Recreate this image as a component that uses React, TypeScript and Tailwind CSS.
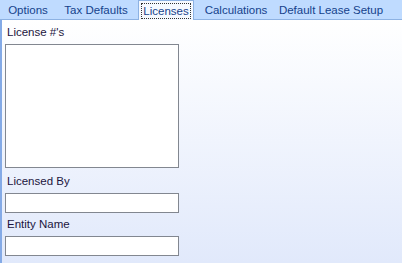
const tabs = [
  { label: "Options", w: "w-[56px]" },
  { label: "Tax Defaults", w: "w-[80px]" },
  { label: "Licenses", w: "w-[56px]", active: true },
  { label: "Calculations", w: "w-[80px]" },
  { label: "Default Lease Setup", w: "w-[110px]" },
];

export default function App() {
  return (
    <div className="w-[402px] h-[263px] flex flex-col overflow-hidden bg-white text-[11.5px] leading-[13px] font-['Liberation_Sans',Arial,sans-serif]">
      <div className="h-[20px] flex items-end bg-[#bfdbff] border-b border-[#8db2e3]">
        {tabs.map((t) =>
          t.active ? (
            <div key={t.label} className={`${t.w} mx-[2px] relative -mb-px h-[20px] flex justify-center pt-[2px] bg-[#f5f9ff] border border-b-0 border-[#8db2e3] text-[#15428b]`}>
              <span className="h-[16px] border border-dotted border-[#333] px-[1px] pt-[1px]">{t.label}</span>
            </div>
          ) : (
            <div key={t.label} className={`${t.w} h-[19px] flex justify-center pt-[4px] text-[#15428b]`}>
              {t.label}
            </div>
          )
        )}
      </div>
      <div className="flex-1 flex flex-col border-l-2 border-[#84aae6] bg-gradient-to-b from-white to-[#e1e9fb] pl-[3px] text-[#1b1540]">
        <div className="pt-[6px] pl-[2px] h-[24px]">License #'s</div>
        <div className="w-[174px] h-[124px] bg-white border border-[#828790]" />
        <div className="pt-[7px] pl-[2px] h-[25px]">Licensed By</div>
        <div className="w-[174px] h-[20px] bg-white border border-[#828790]" />
        <div className="pt-[5px] pl-[2px] h-[23px]">Entity Name</div>
        <div className="w-[174px] h-[20px] bg-white border border-[#828790]" />
      </div>
    </div>
  );
}
